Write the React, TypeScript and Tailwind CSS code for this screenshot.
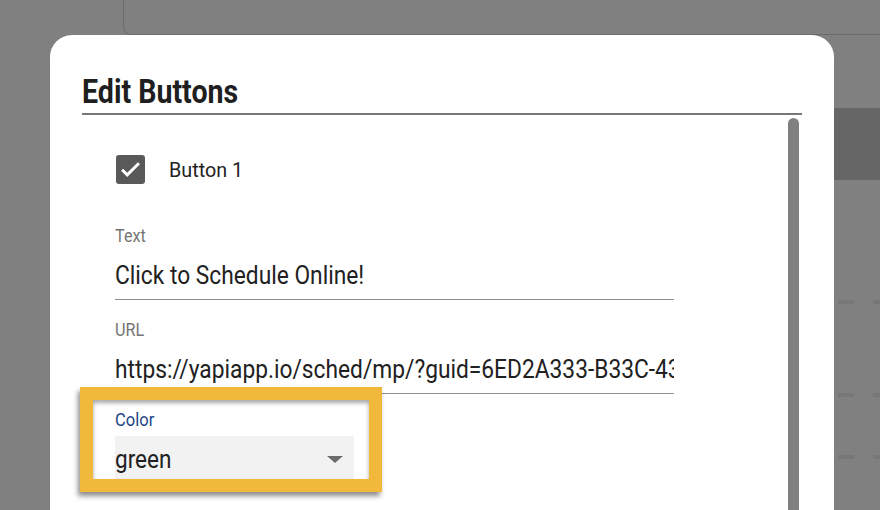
import React from "react";

function Field({ label, value, clip }: { label: string; value: string; clip?: boolean }) {
  return (
    <div className="w-[559px]">
      <div className="h-[20px] text-[18px] leading-[20px] text-[#757575]">
        <span className="inline-block origin-left scale-x-[0.9]">{label}</span>
      </div>
      <div
        className={
          clip
            ? "mt-[18px] h-[36px] overflow-hidden whitespace-nowrap border-b border-[#8f8f8f] text-[25px] leading-[24px] text-[#212121]"
            : "mt-[18px] h-[36px] whitespace-nowrap border-b border-[#8f8f8f] text-[25px] leading-[24px] text-[#212121]"
        }
      >
        <span className="inline-block origin-left scale-x-[0.91]">{value}</span>
      </div>
    </div>
  );
}

function Dash() {
  return (
    <div className="flex gap-[19px]">
      <div className="h-[4px] w-[19px] bg-[#777777]" />
      <div className="h-[4px] w-[8px] bg-[#777777]" />
    </div>
  );
}

export default function App() {
  return (
    <div
      className="relative flex h-[510px] w-[880px] overflow-hidden bg-[#808080]"
      style={{ fontFamily: "Roboto, 'Liberation Sans', sans-serif" }}
    >
      {/* page underneath the dialog */}
      <div className="w-[123px] shrink-0" />
      <div className="flex flex-1 flex-col">
        <div className="h-[35px] rounded-bl-[8px] border-b border-l border-[#6c6c6c]" />
        <div className="flex flex-1 justify-end">
          <div className="flex w-[46px] flex-col pl-[4px]">
            <div className="-ml-[4px] mt-[73px] h-[72px] bg-[#666666]" />
            <div className="mt-[120px]"><Dash /></div>
            <div className="mt-[89px]"><Dash /></div>
            <div className="mt-[58px]"><Dash /></div>
          </div>
        </div>
      </div>

      {/* dialog overlay */}
      <div className="absolute inset-0 pl-[50px] pt-[35px]">
        <div className="h-[560px] w-[784px] rounded-[22px] bg-white">
          <div className="mx-8 pt-[38px]">
            <h2 className="origin-left scale-x-[0.84] text-[34px] font-bold leading-[36px] text-[#1f1f1f]">
              Edit Buttons
            </h2>
            <div className="mt-[4px] h-[2px] bg-[#777777]" />
            <div className="flex">
              <div className="flex-1 pl-[33px]">
                <div className="mt-[40px] flex items-center">
                  <div className="ml-[1px] flex h-[29px] w-[29px] items-center justify-center rounded-[3px] bg-[#595959]">
                    <svg width="27" height="27" viewBox="0 0 24 24" fill="none">
                      <path d="M4.5 12.2l4.6 4.6L19.5 6.4" stroke="white" strokeWidth="2.6" />
                    </svg>
                  </div>
                  <span className="ml-[24px] inline-block origin-left scale-x-[0.94] text-[21px] leading-[24px] text-[#222222]">
                    Button 1
                  </span>
                </div>
                <div className="mt-[42px]">
                  <Field label="Text" value="Click to Schedule Online!" />
                </div>
                <div className="mt-[20px]">
                  <Field label="URL" value="https://yapiapp.io/sched/mp/?guid=6ED2A333-B33C-43F1-9A2B-11" clip />
                </div>
                <div className="mt-[16px] w-[239px]">
                  <div className="h-[20px] text-[18px] leading-[20px] text-[#1c4587]">
                    <span className="inline-block origin-left scale-x-[0.92]">Color</span>
                  </div>
                  <div className="mt-[6px] flex h-[48px] items-center justify-between bg-[#f2f2f2] pr-[11px]">
                    <span className="inline-block origin-left scale-x-[0.9] text-[25px] leading-[24px] text-[#212121]">
                      green
                    </span>
                    <svg width="16" height="8" viewBox="0 0 16 8">
                      <path d="M0 0h16L8 7z" fill="#6b6b6b" />
                    </svg>
                  </div>
                </div>
              </div>
              <div className="mr-[3px] mt-[3px] h-[420px] w-[11px] rounded-t-full bg-[#808080]" />
            </div>
          </div>
        </div>
      </div>

      {/* highlight annotation */}
      <div className="absolute left-[80px] top-[387px] h-[105px] w-[302px] border-[13px] border-[#f0b93b] shadow-[-2px_4px_5px_rgba(0,0,0,0.45),inset_0_3px_4px_rgba(0,0,0,0.35)]" />
    </div>
  );
}
